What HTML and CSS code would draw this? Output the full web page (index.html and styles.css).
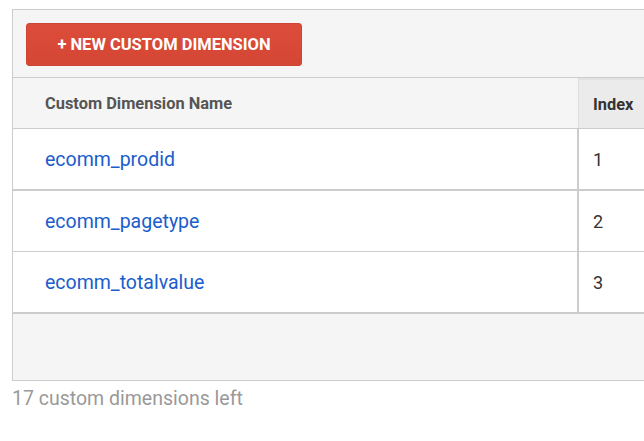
FILE: index.html
```html
<!DOCTYPE html>
<html>
<head>
<meta charset="utf-8">
<link rel="stylesheet" href="styles.css">
</head>
<body>
<div class="page">
  <div class="panel">
    <div class="toolbar">
      <button class="btn-new">+ NEW CUSTOM DIMENSION</button>
    </div>
    <div class="table">
      <div class="row head">
        <div class="cell name">Custom Dimension Name</div>
        <div class="cell idx">Index</div>
      </div>
      <div class="row body thick">
        <div class="cell name"><a class="link">ecomm_prodid</a></div>
        <div class="cell idx">1</div>
      </div>
      <div class="row body">
        <div class="cell name"><a class="link">ecomm_pagetype</a></div>
        <div class="cell idx">2</div>
      </div>
      <div class="row body thick">
        <div class="cell name"><a class="link">ecomm_totalvalue</a></div>
        <div class="cell idx">3</div>
      </div>
    </div>
    <div class="footer-area"></div>
  </div>
  <div class="remaining">17 custom dimensions left</div>
</div>
</body>
</html>
```
FILE: styles.css
```css
html, body {
  margin: 0;
  padding: 0;
  background: #fff;
  overflow: hidden;
}
body {
  font-family: Roboto, "Liberation Sans", Arial, sans-serif;
}
.page {
  padding: 9px 0 0 12px;
}
.panel {
  border: 1px solid #cccccc;
  border-right: none;
  background: #f5f5f5;
}
.toolbar {
  padding: 13px 13px 11px;
  border-bottom: 1px solid #cccccc;
}
.btn-new {
  display: block;
  width: 276px;
  height: 43px;
  border: 1px solid #cf4434;
  border-radius: 3px;
  background: linear-gradient(#dc4c3a, #d44734);
  color: #fff;
  font-family: Roboto, "Liberation Sans", Arial, sans-serif;
  font-weight: 700;
  font-size: 16.5px;
  padding: 0;
}
.row {
  display: flex;
}
.cell.name {
  width: 532px;
  flex: none;
  padding-left: 32px;
  display: flex;
  align-items: center;
}
.cell.idx {
  flex: 1;
  min-width: 0;
  padding-left: 14px;
  display: flex;
  align-items: center;
}
.head {
  height: 50px;
  border-bottom: 1px solid #cccccc;
  font-weight: 700;
  font-size: 16.4px;
}
.head .name {
  color: #555555;
  width: 533px;
}
.head .idx {
  background: #ebebeb;
  color: #333333;
  border-left: 1px solid #dedede;
  border-top: 2px solid #e2e2e2;
  padding-left: 14px;
}
.body {
  height: 60px;
  background: #fff;
  border-bottom: 1px solid #cccccc;
  font-size: 19.5px;
}
.body.thick {
  border-bottom-width: 2px;
}
.body .name {
  border-right: 2px solid #cccccc;
}
.body .idx {
  color: #333333;
  font-size: 18px;
}
.link {
  color: #1a5dcc;
  text-decoration: none;
}
.footer-area {
  height: 66px;
}
.remaining {
  margin-top: 6px;
  color: #999999;
  font-size: 19.5px;
}
```
